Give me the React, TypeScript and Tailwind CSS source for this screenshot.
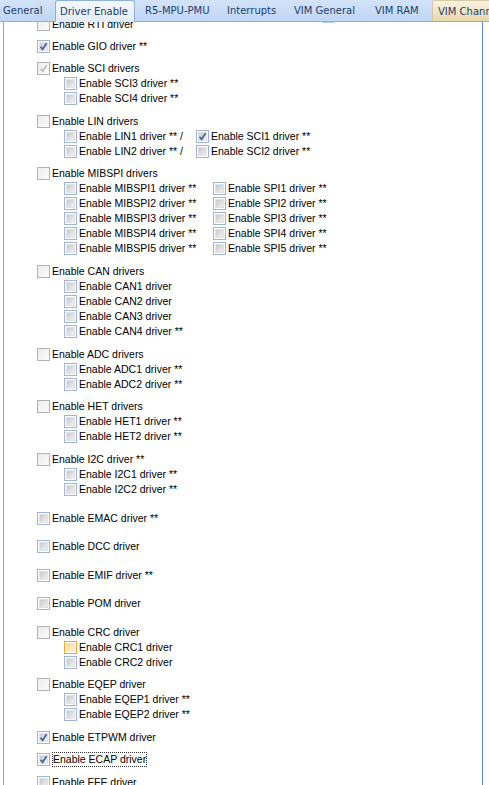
import React from "react";

type Kind = "gray" | "normal" | "checked" | "checkedGray" | "hover";

function Box({ kind }: { kind: Kind }) {
  if (kind === "gray" || kind === "checkedGray") {
    return (
      <span className="relative flex h-[13px] w-[13px] shrink-0 items-center justify-center border border-[#b2b2b2] bg-gradient-to-br from-[#ececec] to-[#fbfbfb]">
        {kind === "checkedGray" && (
          <svg width="11" height="11" viewBox="0 0 11 11" className="absolute left-[0px] top-[0px]">
            <path d="M2.5 5.8 L4.6 8.3 L8.6 2.2" fill="none" stroke="#b4c0d0" strokeWidth="1.6" />
          </svg>
        )}
      </span>
    );
  }
  if (kind === "hover") {
    return (
      <span className="relative flex h-[13px] w-[13px] shrink-0 items-center justify-center border border-[#e3a93f] bg-white">
        <span className="h-[9px] w-[9px] bg-gradient-to-br from-[#fbd98a] to-[#fff6dc]" />
      </span>
    );
  }
  return (
    <span className="relative flex h-[13px] w-[13px] shrink-0 items-center justify-center border border-[#9fb4d6] bg-white">
      <span className="h-[9px] w-[9px] border border-[#e2e2e2] bg-gradient-to-br from-[#c9c9c9] to-[#f2f2f2]" />
      {kind === "checked" && (
        <svg width="11" height="11" viewBox="0 0 11 11" className="absolute left-[0px] top-[0px]">
          <path d="M2.5 5.8 L4.6 8.3 L8.6 2.2" fill="none" stroke="#3f62a8" strokeWidth="1.7" />
        </svg>
      )}
    </span>
  );
}

function Item({ kind, label, focus }: { kind: Kind; label: string; focus?: boolean }) {
  return (
    <div className="flex h-[15px] items-center gap-[2px] whitespace-nowrap">
      <Box kind={kind} />
      {focus ? (
        <span className="border border-dotted border-[#333] px-[0px] leading-[13px]">{label}</span>
      ) : (
        <span className="leading-[15px]">{label}</span>
      )}
    </div>
  );
}

function Sub({ children }: { children: React.ReactNode }) {
  return <div className="flex flex-col pl-[27px]">{children}</div>;
}

const tabFont = { fontFamily: '"DejaVu Sans", Verdana, sans-serif' } as const;

export default function App() {
  return (
    <div
      className="relative h-[785px] w-[489px] overflow-hidden bg-white text-[10.5px] text-black"
      style={{ fontFamily: '"Liberation Sans", Arial, sans-serif' }}
    >
      {/* tab bar */}
      <div
        className="relative z-10 flex h-[22px] items-stretch border-b border-[#8fb0dc] bg-gradient-to-b from-[#d3e3f8] to-[#c0d6f3] text-[10px] text-[#1e3d6b]"
        style={tabFont}
      >
        <div className="flex w-[55px] shrink-0 items-center pl-[3px]">General</div>
        <div className="-mb-[1px] flex w-[80px] shrink-0 items-center rounded-t-[3px] border border-b-0 border-[#8fb0dc] bg-gradient-to-b from-[#f4f8fd] to-[#e2ecf9] pl-[4px]">
          Driver Enable
        </div>
        <div className="flex w-[82px] shrink-0 items-center pl-[10px]">R5-MPU-PMU</div>
        <div className="flex w-[67px] shrink-0 items-center pl-[10px]">Interrupts</div>
        <div className="flex w-[81px] shrink-0 items-center pl-[10px]">VIM General</div>
        <div className="flex w-[67px] shrink-0 items-center pl-[10px]">VIM RAM</div>
        <div className="flex flex-1 items-center overflow-hidden whitespace-nowrap rounded-tl-[3px] border-l border-t border-[#d8c9a4] bg-gradient-to-b from-[#fbf4e3] to-[#e8d5a9] pl-[5px]">
          VIM Channel 0-31
        </div>
      </div>

      {/* content */}
      <div className="relative ml-[3px] h-[763px] w-[480px] overflow-hidden border-l border-r border-[#8aa5cf] border-r-[#5d8bd3]">
        <div className="absolute left-[318px] top-0 h-[1px] w-[13px] bg-[#b7cbe6]" />
        <div className="mt-[-5px] flex flex-col pl-[33px]">
          <Item kind="gray" label="Enable RTI driver" />

          <div className="mt-[7px]">
            <Item kind="checked" label="Enable GIO driver **" />
          </div>

          <div className="mt-[7px]">
            <Item kind="checkedGray" label="Enable SCI drivers" />
            <Sub>
              <Item kind="normal" label="Enable SCI3 driver **" />
              <Item kind="normal" label="Enable SCI4 driver **" />
            </Sub>
          </div>

          <div className="mt-[8px]">
            <Item kind="gray" label="Enable LIN drivers" />
            <Sub>
              <div className="grid grid-cols-[132px_auto]">
                <Item kind="normal" label="Enable LIN1 driver ** /" />
                <Item kind="checked" label="Enable SCI1 driver **" />
                <Item kind="normal" label="Enable LIN2 driver ** /" />
                <Item kind="normal" label="Enable SCI2 driver **" />
              </div>
            </Sub>
          </div>

          <div className="mt-[7px]">
            <Item kind="gray" label="Enable MIBSPI drivers" />
            <Sub>
              <div className="grid grid-cols-[149px_auto]">
                {[1, 2, 3, 4, 5].map((n) => (
                  <React.Fragment key={n}>
                    <Item kind="normal" label={`Enable MIBSPI${n} driver **`} />
                    <Item kind="normal" label={`Enable SPI${n} driver **`} />
                  </React.Fragment>
                ))}
              </div>
            </Sub>
          </div>

          <div className="mt-[8px]">
            <Item kind="gray" label="Enable CAN drivers" />
            <Sub>
              <Item kind="normal" label="Enable CAN1 driver" />
              <Item kind="normal" label="Enable CAN2 driver" />
              <Item kind="normal" label="Enable CAN3 driver" />
              <Item kind="normal" label="Enable CAN4 driver **" />
            </Sub>
          </div>

          <div className="mt-[8px]">
            <Item kind="gray" label="Enable ADC drivers" />
            <Sub>
              <Item kind="normal" label="Enable ADC1 driver **" />
              <Item kind="normal" label="Enable ADC2 driver **" />
            </Sub>
          </div>

          <div className="mt-[7px]">
            <Item kind="gray" label="Enable HET drivers" />
            <Sub>
              <Item kind="normal" label="Enable HET1 driver **" />
              <Item kind="normal" label="Enable HET2 driver **" />
            </Sub>
          </div>

          <div className="mt-[8px]">
            <Item kind="gray" label="Enable I2C driver **" />
            <Sub>
              <Item kind="normal" label="Enable I2C1 driver **" />
              <Item kind="normal" label="Enable I2C2 driver **" />
            </Sub>
          </div>

          <div className="mt-[14px]">
            <Item kind="normal" label="Enable EMAC driver **" />
          </div>
          <div className="mt-[13px]">
            <Item kind="normal" label="Enable DCC driver" />
          </div>
          <div className="mt-[14px]">
            <Item kind="normal" label="Enable EMIF driver **" />
          </div>
          <div className="mt-[13px]">
            <Item kind="normal" label="Enable POM driver" />
          </div>

          <div className="mt-[14px]">
            <Item kind="gray" label="Enable CRC driver" />
            <Sub>
              <Item kind="hover" label="Enable CRC1 driver" />
              <Item kind="normal" label="Enable CRC2 driver" />
            </Sub>
          </div>

          <div className="mt-[7px]">
            <Item kind="gray" label="Enable EQEP driver" />
            <Sub>
              <Item kind="normal" label="Enable EQEP1 driver **" />
              <Item kind="normal" label="Enable EQEP2 driver **" />
            </Sub>
          </div>

          <div className="mt-[8px]">
            <Item kind="checked" label="Enable ETPWM driver" />
          </div>
          <div className="mt-[7px]">
            <Item kind="checked" label="Enable ECAP driver" focus />
          </div>
          <div className="mt-[8px]">
            <Item kind="normal" label="Enable FFE driver" />
          </div>
        </div>
      </div>
    </div>
  );
}
